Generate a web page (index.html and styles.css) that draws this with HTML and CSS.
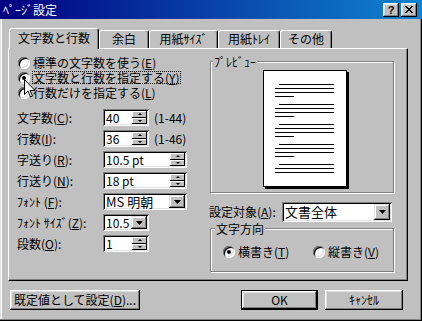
FILE: index.html
```html
<!DOCTYPE html>
<html lang="ja">
<head>
<meta charset="utf-8">
<title>ページ設定</title>
<link rel="stylesheet" href="styles.css">
</head>
<body>
<div class="window">
  <div class="titlebar">
    <span class="title">ﾍﾟｰｼﾞ設定</span>
    <div class="tbtns">
      <span class="tbtn help">?</span>
      <span class="tbtn"><svg width="8" height="7" viewBox="0 0 8 7"><path d="M0 0h2v1h1v1h2v-1h1v-1h2v1h-1v1h-1v1h-1v1h1v1h1v1h1v1h-2v-1h-1v-1h-2v1h-1v1h-2v-1h1v-1h1v-1h1v-1h-1v-1h-1v-1h-1z" fill="#000"/></svg></span>
    </div>
  </div>
  <div class="content">
    <div class="tabs">
      <div class="tab active t1">文字数と行数</div>
      <div class="tab t2">余白</div>
      <div class="tab t3">用紙ｻｲｽﾞ</div>
      <div class="tab t4">用紙ﾄﾚｲ</div>
      <div class="tab t5">その他</div>
    </div>
    <div class="panel">
      <div class="left">
        <div class="radios">
          <div class="radio-row"><span class="radio"></span><span class="rtext">標準の文字数を使う(<u>E</u>)</span></div>
          <div class="radio-row"><span class="radio checked"></span><span class="rtext focus">文字数と行数を指定する(<u>Y</u>)</span></div>
          <div class="radio-row"><span class="radio"></span><span class="rtext">行数だけを指定する(<u>L</u>)</span></div>
        </div>
        <div class="fields">
          <div class="field">
            <span class="flabel">文字数(<u>C</u>):</span>
            <div class="input short"><span class="val">40</span><span class="spin"><span class="sb"><i class="up"></i></span><span class="sb"><i class="dn"></i></span></span></div>
            <span class="range">(1-44)</span>
          </div>
          <div class="field">
            <span class="flabel">行数(<u>I</u>):</span>
            <div class="input short"><span class="val">36</span><span class="spin"><span class="sb"><i class="up"></i></span><span class="sb"><i class="dn"></i></span></span></div>
            <span class="range">(1-46)</span>
          </div>
          <div class="field">
            <span class="flabel">字送り(<u>R</u>):</span>
            <div class="input long"><span class="val">10.5 pt</span><span class="spin"><span class="sb"><i class="up"></i></span><span class="sb"><i class="dn"></i></span></span></div>
          </div>
          <div class="field">
            <span class="flabel">行送り(<u>N</u>):</span>
            <div class="input long"><span class="val">18 pt</span><span class="spin"><span class="sb"><i class="up"></i></span><span class="sb"><i class="dn"></i></span></span></div>
          </div>
          <div class="field">
            <span class="flabel">ﾌｫﾝﾄ (<u>F</u>):</span>
            <div class="input long"><span class="val big">MS 明朝</span><span class="drop"><svg width="7" height="4" viewBox="0 0 7 4"><path d="M0 0h7l-3.5 4z" fill="#000"/></svg></span></div>
          </div>
          <div class="field">
            <span class="flabel">ﾌｫﾝﾄ ｻｲｽﾞ(<u>Z</u>):</span>
            <div class="input short"><span class="val">10.5</span><span class="drop"><svg width="7" height="4" viewBox="0 0 7 4"><path d="M0 0h7l-3.5 4z" fill="#000"/></svg></span></div>
          </div>
          <div class="field">
            <span class="flabel">段数(<u>O</u>):</span>
            <div class="input short"><span class="val">1</span><span class="spin"><span class="sb"><i class="up"></i></span><span class="sb"><i class="dn"></i></span></span></div>
          </div>
        </div>
      </div>
      <div class="right">
        <div class="group preview">
          <span class="gcap cap-preview">ﾌﾟﾚﾋﾞｭｰ</span>
          <div class="page">
            <svg width="82" height="115" viewBox="0 0 82 115">
              <g fill="#000">
                <rect x="15" y="13" width="55" height="1"/><rect x="11" y="17" width="59" height="1"/><rect x="11" y="21" width="59" height="1"/><rect x="11" y="25" width="19" height="1"/>
                <rect x="15" y="33" width="55" height="1"/><rect x="11" y="37" width="59" height="1"/><rect x="11" y="41" width="59" height="1"/><rect x="11" y="45" width="19" height="1"/>
                <rect x="15" y="53" width="55" height="1"/><rect x="11" y="57" width="59" height="1"/><rect x="11" y="61" width="59" height="1"/><rect x="11" y="65" width="19" height="1"/>
                <rect x="15" y="73" width="55" height="1"/><rect x="11" y="77" width="59" height="1"/><rect x="11" y="81" width="59" height="1"/><rect x="11" y="85" width="19" height="1"/>
                <rect x="15" y="93" width="55" height="1"/><rect x="11" y="97" width="59" height="1"/><rect x="11" y="101" width="59" height="1"/>
              </g>
            </svg>
          </div>
        </div>
        <div class="target-row">
          <span class="tlabel">設定対象(<u>A</u>):</span>
          <div class="input target"><span class="val">文書全体</span><span class="drop"><svg width="7" height="4" viewBox="0 0 7 4"><path d="M0 0h7l-3.5 4z" fill="#000"/></svg></span></div>
        </div>
        <div class="group direction">
          <span class="gcap cap-dir">文字方向</span>
          <div class="dir-row">
            <div class="radio-row first"><span class="radio checked"></span><span class="rtext">横書き(<u>T</u>)</span></div>
            <div class="radio-row"><span class="radio"></span><span class="rtext">縦書き(<u>V</u>)</span></div>
          </div>
        </div>
      </div>
    </div>
    <div class="footer">
      <div class="btn b-default">既定値として設定(<u>D</u>)...</div>
      <div class="btn b-ok">OK</div>
      <div class="btn b-cancel">ｷｬﾝｾﾙ</div>
    </div>
  </div>
  <svg class="cursor" width="12" height="20" viewBox="0 0 12 20"><path d="M0.5 0.5v15l3.5-3.5 2.5 6 2-1-2.5-5.5h5z" fill="#fff" stroke="#000" stroke-width="1"/></svg>
</div>
</body>
</html>
```
FILE: styles.css
```css
* { box-sizing: border-box; }
html, body { margin: 0; padding: 0; }
body {
  width: 422px;
  height: 321px;
  overflow: hidden;
  background: #c0c0c0;
  font-family: "Noto Sans CJK JP", "Noto Sans", sans-serif;
  font-size: 12px;
  line-height: 14px;
  color: #000;
}
u { text-decoration: underline; text-underline-offset: 1px; }

.window {
  position: relative;
  width: 422px;
  height: 321px;
  background: #c0c0c0;
  box-shadow: inset -1px -1px 0 #000, inset -2px -2px 0 #808080, inset 1px 0 0 #dfdfdf, inset 2px 0 0 #fff;
}

.titlebar {
  height: 19px;
  display: flex;
  align-items: center;
  justify-content: space-between;
  padding: 0 5px 0 3px;
  background: linear-gradient(to right, #000080, #1084d0);
  color: #fff;
}
.title { line-height: 14px; }
.tbtns { display: flex; gap: 2px; }
.tbtn {
  width: 16px;
  height: 14px;
  background: #c0c0c0;
  color: #000;
  display: flex;
  align-items: center;
  justify-content: center;
  box-shadow: inset -1px -1px 0 #000, inset 1px 1px 0 #fff, inset -2px -2px 0 #808080, inset 2px 2px 0 #dfdfdf;
}
.tbtn.help {
  font-family: "Liberation Sans", sans-serif;
  font-weight: bold;
  font-size: 11px;
  line-height: 12px;
}

.content { padding: 9px 0 0 8px; }

.tabs {
  display: flex;
  align-items: flex-end;
  height: 20px;
  margin-left: 1px;
  position: relative;
  z-index: 1;
}
.tab {
  height: 18px;
  padding-top: 1px;
  text-align: center;
  background: #c0c0c0;
  border-top: 1px solid #fff;
  border-left: 1px solid #fff;
  border-right: 1px solid #000;
  border-radius: 3px 3px 0 0;
  box-shadow: inset -1px 0 0 #808080;
}
.tab.active {
  height: 21px;
  padding-top: 2px;
  margin-bottom: -1px;
}
.t1 { width: 90px; }
.t2 { width: 50px; }
.t3 { width: 69px; }
.t4 { width: 62px; }
.t5 { width: 52px; }

.panel {
  display: flex;
  width: 400px;
  height: 233px;
  border: 1px solid;
  border-color: #fff #000 #000 #fff;
  box-shadow: inset -1px -1px 0 #808080;
}

.left { width: 201px; padding-top: 6px; }
.radios { display: flex; flex-direction: column; padding-left: 9px; }
.radio-row { display: flex; align-items: center; height: 15px; white-space: nowrap; }
.radio {
  position: relative;
  flex: none;
  width: 12px;
  height: 12px;
  border-radius: 50%;
  background: #fff;
  margin-right: 2px;
  box-shadow: inset 1px 1px 0 #808080, inset -1px -1px 0 #fff, inset 2px 2px 0 #000, inset -2px -2px 0 #dfdfdf;
}
.radio.checked::after {
  content: "";
  position: absolute;
  left: 4px;
  top: 4px;
  width: 4px;
  height: 4px;
  border-radius: 50%;
  background: #000;
}
.rtext { padding: 0 1px; line-height: 13px; }
.rtext.focus { outline: 1px dotted #000; outline-offset: -1px; }

.fields { margin-top: 9px; padding-left: 8px; display: flex; flex-direction: column; gap: 4px; }
.field { display: flex; align-items: center; height: 17px; white-space: nowrap; }
.flabel { width: 86px; flex: none; }
.range { margin-left: 5px; }

.input {
  display: flex;
  align-items: stretch;
  height: 17px;
  padding: 2px;
  background: #fff;
  box-shadow: inset 1px 1px 0 #808080, inset -1px -1px 0 #fff, inset 2px 2px 0 #000, inset -2px -2px 0 #dfdfdf;
}
.input.short { width: 46px; }
.input.long { width: 84px; }
.val { flex: 1; display: flex; align-items: center; padding-left: 1px; line-height: 13px; white-space: nowrap; }
.val.big { font-size: 13px; }

.spin { display: flex; flex-direction: column; width: 15px; flex: none; }
.sb {
  flex: 1;
  display: flex;
  align-items: center;
  justify-content: center;
  background: #c0c0c0;
  box-shadow: inset -1px -1px 0 #000, inset 1px 1px 0 #fff;
}
.sb i { display: block; width: 0; height: 0; border-left: 2px solid transparent; border-right: 2px solid transparent; }
.sb i.up { border-bottom: 2px solid #000; }
.sb i.dn { border-top: 2px solid #000; }

.drop {
  width: 16px;
  flex: none;
  display: flex;
  align-items: center;
  justify-content: center;
  background: #c0c0c0;
  box-shadow: inset -1px -1px 0 #000, inset 1px 1px 0 #dfdfdf, inset -2px -2px 0 #808080, inset 2px 2px 0 #fff;
}
.drop svg { display: block; }

.right { width: 184px; padding-top: 12px; }

.group {
  position: relative;
  border: 1px solid #808080;
  box-shadow: inset 1px 1px 0 #fff, 1px 1px 0 #fff;
}
.gcap {
  position: absolute;
  top: -7px;
  background: #c0c0c0;
  padding: 0 1px;
  line-height: 14px;
  white-space: nowrap;
}
.cap-preview { left: 2px; }
.cap-dir { left: 4px; }

.preview { height: 132px; padding: 8px 0 0 52px; }
.page {
  width: 84px;
  height: 117px;
  border: 1px solid #000;
  background: #fff;
  box-shadow: 2px 2px 0 #000;
}
.page svg { display: block; }

.target-row { display: flex; align-items: center; margin: 9px 0 0 -1px; white-space: nowrap; }
.tlabel { width: 73px; flex: none; }
.input.target { width: 110px; height: 20px; }
.input.target .val { line-height: 16px; font-size: 13px; }

.direction { margin-top: 6px; height: 44px; padding: 15px 0 0 12px; }
.dir-row { display: flex; }
.dir-row .first { width: 90px; }

.footer { display: flex; margin-top: 9px; padding-left: 2px; }
.btn {
  height: 20px;
  display: flex;
  align-items: center;
  justify-content: center;
  white-space: nowrap;
  background: #c0c0c0;
  box-shadow: inset -1px -1px 0 #000, inset 1px 1px 0 #fff, inset -2px -2px 0 #808080, inset 2px 2px 0 #dfdfdf;
}
.b-default { width: 130px; }
.b-ok {
  width: 77px;
  margin-left: 101px;
  box-shadow: inset 0 0 0 1px #000, inset -2px -2px 0 #000, inset 2px 2px 0 #fff, inset -3px -3px 0 #808080, inset 3px 3px 0 #dfdfdf;
}
.b-cancel { width: 78px; margin-left: 7px; }

.cursor { position: absolute; left: 24px; top: 79px; }
```
